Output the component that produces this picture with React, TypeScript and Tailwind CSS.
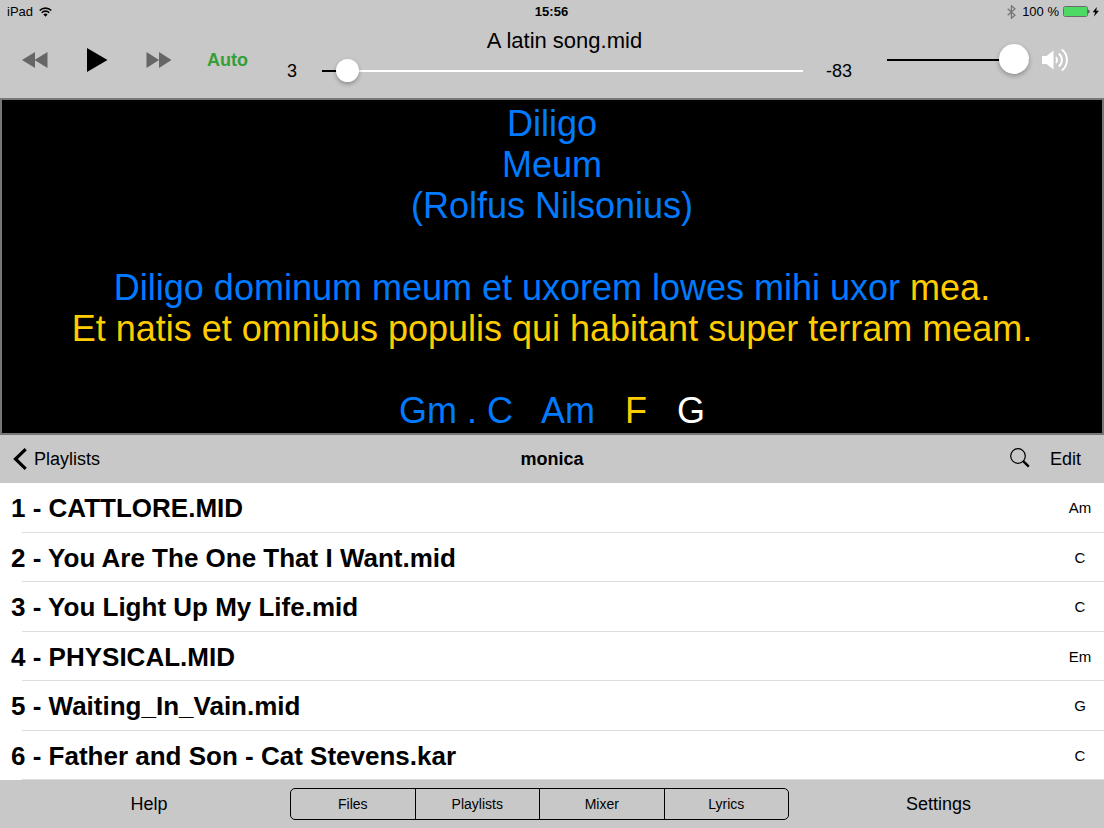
import { useState } from "react";

const songs = [
  { title: "CATTLORE.MID", tone: "Am" },
  { title: "You Are The One That I Want.mid", tone: "C" },
  { title: "You Light Up My Life.mid", tone: "C" },
  { title: "PHYSICAL.MID", tone: "Em" },
  { title: "Waiting_In_Vain.mid", tone: "G" },
  { title: "Father and Son - Cat Stevens.kar", tone: "C" },
];

const views = ["Files", "Playlists", "Mixer", "Lyrics"];

function StatusBar() {
  return (
    <div className="grid h-6 grid-cols-3 items-center pr-1 pl-[7px] text-[13px] leading-4">
      <div className="flex items-center gap-1.5">
        <span>iPad</span>
        <svg width="13" height="10" viewBox="0 0 13 10" fill="none" stroke="black" strokeWidth="1.6" aria-hidden="true">
          <path d="M0.7 3.5a8.3 8.3 0 0 1 11.6 0" />
          <path d="M2.7 5.7a5.4 5.4 0 0 1 7.6 0" />
          <path d="M6.5 9.8 4.4 7.6a3 3 0 0 1 4.2 0z" fill="black" stroke="none" />
        </svg>
      </div>
      <time className="pr-1 text-center font-bold">15:56</time>
      <div className="flex items-center justify-end">
        <svg className="mr-1.5" width="9" height="14" viewBox="0 0 9 14" fill="none" stroke="#777" strokeWidth="1.3" aria-hidden="true">
          <path d="M0.7 3.8 8 10.2 4.4 13.2V0.8L8 3.8 0.7 10.2" />
        </svg>
        <span>100 %</span>
        <svg className="ml-1" width="37" height="12" viewBox="0 0 37 12" aria-hidden="true">
          <rect x="0.5" y="0.5" width="24" height="10" rx="1.8" fill="#c8c8c8" stroke="#6b6b6b" />
          <rect x="1" y="1" width="23" height="9" rx="1" fill="#4cd964" />
          <path d="M25.4 3.6c1.4.3 1.4 3.6 0 3.9z" fill="#222" />
          <path d="M33.8 1 29.6 6.300h2.500L31 10.600l5-5.900h-2.700z" fill="black" />
        </svg>
      </div>
    </div>
  );
}

function Player() {
  const [position, setPosition] = useState(3);
  const [volume, setVolume] = useState(100);
  return (
    <div className="flex h-[74px] pr-9 pl-[22px]">
      <div className="flex items-center pb-[3px]">
        <button type="button" aria-label="Rewind">
          <svg width="26" height="16" viewBox="0 0 26 16" fill="#666">
            <path d="M0 8 13 0v16zM12.500 8 25.500 0v16z" />
          </svg>
        </button>
        <button type="button" aria-label="Play" className="ml-[39px]">
          <svg width="21" height="24" viewBox="0 0 21 24">
            <path d="M0 0 20.500 12 0 24z" />
          </svg>
        </button>
        <button type="button" aria-label="Fast forward" className="ml-[38px]">
          <svg width="26" height="16" viewBox="0 0 26 16" fill="#666">
            <path d="M0.500 0 13 8 0.500 16zM13 0l12.500 8L13 16z" />
          </svg>
        </button>
        <button type="button" className="ml-[35px] text-[18px] leading-6 font-bold text-[#339f36]">Auto</button>
      </div>

      <div className="ml-[39px] flex min-w-0 flex-1 flex-col pt-[5px]">
        <h1 className="pr-[18px] text-center text-[22px] leading-6">A latin song.mid</h1>
        <div className="mt-[7px] flex items-center text-[18px] leading-[22px]">
          <span className="w-[35px]">3</span>
          <input
            type="range"
            aria-label="Song position"
            min={0}
            max={100}
            value={position}
            onChange={(e) => setPosition(Number(e.target.value))}
            className="h-[22px] min-w-0 flex-1 appearance-none bg-transparent [&::-webkit-slider-runnable-track]:h-[2px] [&::-webkit-slider-runnable-track]:bg-linear-to-r [&::-webkit-slider-runnable-track]:from-black [&::-webkit-slider-runnable-track]:from-5% [&::-webkit-slider-runnable-track]:to-white [&::-webkit-slider-runnable-track]:to-5% [&::-webkit-slider-thumb]:-mt-[11px] [&::-webkit-slider-thumb]:size-[23px] [&::-webkit-slider-thumb]:appearance-none [&::-webkit-slider-thumb]:rounded-full [&::-webkit-slider-thumb]:bg-white [&::-webkit-slider-thumb]:shadow-[0_2px_4px_rgba(0,0,0,0.3)]"
          />
          <span className="w-[57px] pl-[23px]">-83</span>
        </div>
      </div>

      <div className="ml-[27px] flex items-center gap-[13px] pb-[3px]">
        <input
          type="range"
          aria-label="Volume"
          min={0}
          max={100}
          value={volume}
          onChange={(e) => setVolume(Number(e.target.value))}
          className="h-[30px] w-[142px] appearance-none bg-transparent [&::-webkit-slider-runnable-track]:h-[2px] [&::-webkit-slider-runnable-track]:bg-black [&::-webkit-slider-thumb]:-mt-[15px] [&::-webkit-slider-thumb]:size-[30px] [&::-webkit-slider-thumb]:appearance-none [&::-webkit-slider-thumb]:rounded-full [&::-webkit-slider-thumb]:bg-white [&::-webkit-slider-thumb]:shadow-[0_2px_5px_rgba(0,0,0,0.3)]"
        />
        <svg width="26" height="24" viewBox="0 0 26 24" fill="none" stroke="white" strokeWidth="1.900" aria-hidden="true">
          <path d="M0 8h4.500L11.500 2.500v19L4.500 16H0z" fill="white" stroke="none" />
          <path d="M13.800 9.300a3.600 3.600 0 0 1 0 5.400" />
          <path d="M16.800 5.500a8.400 8.400 0 0 1 0 13" />
          <path d="M19.800 1.500a13.300 13.300 0 0 1 0 21" />
        </svg>
      </div>
    </div>
  );
}

function LyricsPanel() {
  return (
    <section
      aria-label="Lyrics"
      className="border-2 border-[#777] bg-black pt-[3px] pb-0.5 text-center text-[36px] leading-[41px] whitespace-pre text-[#007aff]"
    >
      <p>Diligo</p>
      <p>Meum</p>
      <p>(Rolfus Nilsonius)</p>
      <p className="mt-[41px]">
        Diligo dominum meum et uxorem lowes mihi uxor <span className="text-[#ffcc00]">mea.</span>
      </p>
      <p className="text-[#ffcc00]">Et natis et omnibus populis qui habitant super terram meam.</p>
      <p className="mt-[41px]">
        {"Gm . C   Am   "}
        <span className="text-[#ffcc00]">F</span>
        {"   "}
        <span className="text-white">G</span>
      </p>
    </section>
  );
}

function PlaylistHeader() {
  return (
    <div className="grid h-12 grid-cols-[1fr_auto_1fr] items-center bg-[#c8c8c8] px-[13px] text-[18px] leading-6">
      <button type="button" className="flex items-center gap-[7px] justify-self-start">
        <svg width="14" height="22" viewBox="0 0 14 22" fill="none" stroke="black" strokeWidth="3.200" aria-hidden="true">
          <path d="M12.700 1.200 2.500 11l10.200 9.800" />
        </svg>
        Playlists
      </button>
      <h2 className="font-bold">monica</h2>
      <div className="flex items-center justify-end gap-5 pr-2.5">
        <button type="button" aria-label="Search" className="pb-0.5">
          <svg width="20" height="20" viewBox="0 0 20 20" fill="none" stroke="black" aria-hidden="true">
            <circle cx="8" cy="8" r="7.300" strokeWidth="1.200" />
            <path d="m13.200 13.200 5.600 5.500" strokeWidth="2.400" />
          </svg>
        </button>
        <button type="button">Edit</button>
      </div>
    </div>
  );
}

export default function App() {
  return (
    <div className="flex min-h-screen flex-col bg-white font-['Liberation_Sans',Arial,sans-serif] text-black">
      <header className="bg-[#c8c8c8]">
        <StatusBar />
        <Player />
      </header>
      <LyricsPanel />
      <PlaylistHeader />
      <ol className="grid flex-1 auto-rows-fr">
        {songs.map((song, i) => (
          <li key={song.title} className="flex min-h-12 flex-col">
            <button type="button" className="flex flex-1 items-center justify-between pt-0.5 pl-[11px] text-left">
              <span className="text-[26px] leading-8 font-bold">
                {i + 1} - {song.title}
              </span>
              <span className="w-12 text-center text-[15px] leading-5">{song.tone}</span>
            </button>
            <div className="ml-[22px] h-px bg-[#dedede]" />
          </li>
        ))}
      </ol>
      <footer className="grid h-12 grid-cols-[290fr_499fr_315fr] items-center bg-[#c8c8c8] text-[18px] leading-6">
        <button type="button" className="justify-self-center pl-2">Help</button>
        <nav className="flex h-8 divide-x divide-black rounded-[5px] border border-black text-[14px] leading-5">
          {views.map((view) => (
            <button key={view} type="button" className="flex-1">
              {view}
            </button>
          ))}
        </nav>
        <button type="button" className="justify-self-center pr-4">Settings</button>
      </footer>
    </div>
  );
}
